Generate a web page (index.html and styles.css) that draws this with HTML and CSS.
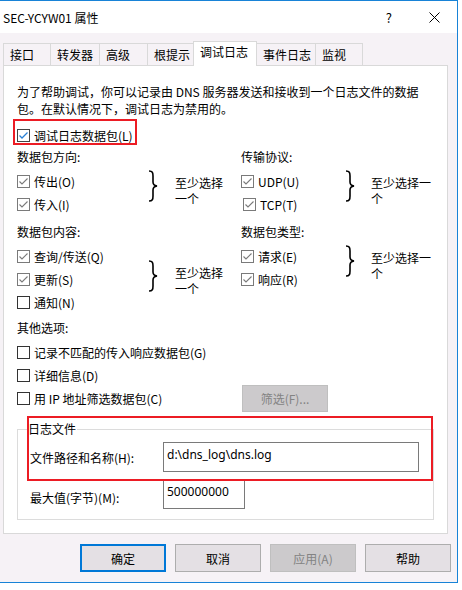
FILE: index.html
```html
<!DOCTYPE html>
<html lang="zh-CN">
<head>
    <meta charset="UTF-8">
    <title>SEC-YCYW01 属性</title>
    <link rel="stylesheet" href="styles.css">
</head>
<body>
    <div class="window">
        <div class="titlebar">
            <span class="title">SEC-YCYW01 属性</span>
            <span class="help">?</span>
            <svg class="close" width="11" height="11" viewBox="0 0 11 11"><path d="M0.5 0.5 L10.5 10.5 M10.5 0.5 L0.5 10.5" stroke="#000" stroke-width="1" fill="none"/></svg>
        </div>

        <div class="client">
            <div class="tabs">
                <div class="tab w1">接口</div>
                <div class="tab w2">转发器</div>
                <div class="tab w3">高级</div>
                <div class="tab w4">根提示</div>
                <div class="tab w5 active">调试日志</div>
                <div class="tab w6">事件日志</div>
                <div class="tab w7">监视</div>
            </div>

            <div class="panel">
                <p class="intro">为了帮助调试，你可以记录由 DNS 服务器发送和接收到一个日志文件的数据<br>包。在默认情况下，调试日志为禁用的。</p>

                <div class="row main">
                    <span class="cb on blue"><svg width="11" height="11" viewBox="0 0 11 11"><polyline points="1.5,5.5 4,8 9.5,2.5" fill="none" stroke="#2a7fd4" stroke-width="1.3"/></svg></span>调试日志数据包(L)
                </div>

                <div class="pair">
                    <div class="section left">
                        <div class="heading">数据包方向:</div>
                        <div class="opt-group">
                            <div class="list">
                                <div class="row"><span class="cb on"><svg width="11" height="11" viewBox="0 0 11 11"><polyline points="1.5,5.5 4,8 9.5,2.5" fill="none" stroke="#7a7a7a" stroke-width="1.1"/></svg></span>传出(O)</div>
                                <div class="row"><span class="cb on"><svg width="11" height="11" viewBox="0 0 11 11"><polyline points="1.5,5.5 4,8 9.5,2.5" fill="none" stroke="#7a7a7a" stroke-width="1.1"/></svg></span>传入(I)</div>
                            </div>
                            <div class="hint">
                                <svg class="brace" width="10" height="32" viewBox="0 0 10 32"><path d="M1 1 C4.5 1 5 2.5 5 6 L5 12 C5 14.5 6 15.5 9 16 C6 16.5 5 17.5 5 20 L5 26 C5 29.5 4.5 31 1 31" fill="none" stroke="#000" stroke-width="1.6"/></svg>
                                <div class="note">至少选择一个</div>
                            </div>
                        </div>
                    </div>
                    <div class="section right">
                        <div class="heading">传输协议:</div>
                        <div class="opt-group">
                            <div class="list">
                                <div class="row"><span class="cb on"><svg width="11" height="11" viewBox="0 0 11 11"><polyline points="1.5,5.5 4,8 9.5,2.5" fill="none" stroke="#7a7a7a" stroke-width="1.1"/></svg></span>UDP(U)</div>
                                <div class="row indent"><span class="cb on"><svg width="11" height="11" viewBox="0 0 11 11"><polyline points="1.5,5.5 4,8 9.5,2.5" fill="none" stroke="#7a7a7a" stroke-width="1.1"/></svg></span>TCP(T)</div>
                            </div>
                            <div class="hint">
                                <svg class="brace" width="10" height="32" viewBox="0 0 10 32"><path d="M1 1 C4.5 1 5 2.5 5 6 L5 12 C5 14.5 6 15.5 9 16 C6 16.5 5 17.5 5 20 L5 26 C5 29.5 4.5 31 1 31" fill="none" stroke="#000" stroke-width="1.6"/></svg>
                                <div class="note">至少选择一个</div>
                            </div>
                        </div>
                    </div>
                </div>

                <div class="pair second">
                    <div class="section left">
                        <div class="heading">数据包内容:</div>
                        <div class="opt-group">
                            <div class="list">
                                <div class="row"><span class="cb on"><svg width="11" height="11" viewBox="0 0 11 11"><polyline points="1.5,5.5 4,8 9.5,2.5" fill="none" stroke="#7a7a7a" stroke-width="1.1"/></svg></span>查询/传送(Q)</div>
                                <div class="row"><span class="cb on"><svg width="11" height="11" viewBox="0 0 11 11"><polyline points="1.5,5.5 4,8 9.5,2.5" fill="none" stroke="#7a7a7a" stroke-width="1.1"/></svg></span>更新(S)</div>
                                <div class="row"><span class="cb"></span>通知(N)</div>
                            </div>
                            <div class="hint low">
                                <svg class="brace" width="10" height="32" viewBox="0 0 10 32"><path d="M1 1 C4.5 1 5 2.5 5 6 L5 12 C5 14.5 6 15.5 9 16 C6 16.5 5 17.5 5 20 L5 26 C5 29.5 4.5 31 1 31" fill="none" stroke="#000" stroke-width="1.6"/></svg>
                                <div class="note">至少选择一个</div>
                            </div>
                        </div>
                    </div>
                    <div class="section right">
                        <div class="heading">数据包类型:</div>
                        <div class="opt-group">
                            <div class="list">
                                <div class="row"><span class="cb on"><svg width="11" height="11" viewBox="0 0 11 11"><polyline points="1.5,5.5 4,8 9.5,2.5" fill="none" stroke="#7a7a7a" stroke-width="1.1"/></svg></span>请求(E)</div>
                                <div class="row"><span class="cb on"><svg width="11" height="11" viewBox="0 0 11 11"><polyline points="1.5,5.5 4,8 9.5,2.5" fill="none" stroke="#7a7a7a" stroke-width="1.1"/></svg></span>响应(R)</div>
                            </div>
                            <div class="hint">
                                <svg class="brace" width="10" height="32" viewBox="0 0 10 32"><path d="M1 1 C4.5 1 5 2.5 5 6 L5 12 C5 14.5 6 15.5 9 16 C6 16.5 5 17.5 5 20 L5 26 C5 29.5 4.5 31 1 31" fill="none" stroke="#000" stroke-width="1.6"/></svg>
                                <div class="note">至少选择一个</div>
                            </div>
                        </div>
                    </div>
                </div>

                <div class="heading others">其他选项:</div>
                <div class="other-list">
                    <div class="row"><span class="cb"></span>记录不匹配的传入响应数据包(G)</div>
                    <div class="row"><span class="cb"></span>详细信息(D)</div>
                    <div class="row"><span class="cb"></span><span class="wide">用 IP 地址筛选数据包(C)</span><button class="filter" disabled>筛选(F)...</button></div>
                </div>

                <fieldset class="logfile">
                    <legend>日志文件</legend>
                    <div class="field">
                        <label>文件路径和名称(H):</label>
                        <div class="textbox path">d:\dns_log\dns.log</div>
                    </div>
                    <div class="field size">
                        <label>最大值(字节)(M):</label>
                        <div class="textbox maxsize">500000000</div>
                    </div>
                </fieldset>

                <div class="mark mark1"></div>
                <div class="mark mark2"></div>
            </div>

            <div class="buttons">
                <button class="btn default">确定</button>
                <button class="btn">取消</button>
                <button class="btn" disabled>应用(A)</button>
                <button class="btn">帮助</button>
            </div>
        </div>
    </div>
</body>
</html>
```

FILE: styles.css
```css
body {
    margin: 0; background: #fff; color: #000;
    font-family: "Noto Sans CJK SC", "Noto Sans", sans-serif; font-size: 12px;
}
.window {
    width: 458px; height: 583px; box-sizing: border-box; background: #f6f2f6;
    border: 1px solid #1883d7; border-left: none;
}
.titlebar {
    height: 32px; background: #fff; display: flex; align-items: center; padding: 0 17px 0 3px;
}
.help { margin-left: auto; margin-right: 37px; font-size: 13px; }
.close { display: block; }

.client { padding: 8px 9px 0 3px; }

/* tabs */
.tabs { display: flex; align-items: flex-end; height: 24px; }
.tab {
    height: 22px; box-sizing: border-box; border: 1px solid #d9d9d9; border-bottom: none;
    margin-left: -1px; padding-left: 6px; line-height: 21px; background: #f6f2f6; white-space: nowrap;
}
.tab:first-child { margin-left: 0; }
.tab.active { height: 25px; background: #fff; margin-bottom: -1px; position: relative; z-index: 1; line-height: 19px; }
.w1 { width: 48px; } .w2 { width: 50px; } .w3 { width: 49px; } .w4 { width: 47px; }
.w5 { width: 64px; } .w6 { width: 60px; } .w7 { width: 48px; }

.panel {
    height: 469px; box-sizing: border-box; border: 1px solid #d9d9d9; background: #fff;
    padding: 17px 13px 0; position: relative;
}
.intro { margin: 0; line-height: 17px; white-space: nowrap; }

/* checkbox rows */
.row { display: flex; align-items: center; height: 23px; white-space: nowrap; }
.row.main { margin-top: 7px; }
.row.indent { padding-left: 2px; }
.cb {
    width: 13px; height: 13px; box-sizing: border-box; border: 1px solid #333; margin-right: 4px;
    flex: none; display: flex;
}
.cb.on { border-color: #7a7a7a; }
.cb.blue { border-color: #444; }
.cb svg { display: block; }

.pair { display: flex; }
.pair.second { margin-top: 6px; }
.left { width: 224px; }
.heading { line-height: 20px; }
.opt-group { display: flex; align-items: flex-start; margin-top: 3px; }
.left .list { width: 131px; }
.right .list { width: 104px; }
.hint { display: flex; align-items: flex-start; }
.hint.low { margin-top: 15px; }
.brace { display: block; flex: none; }
.note { margin-top: 5px; line-height: 16px; }
.left .note { margin-left: 17px; width: 50px; }
.right .note { margin-left: 16px; width: 62px; }

.heading.others { margin-top: 4px; }
.other-list { margin-top: 3px; }
.wide { width: 208px; }
.filter {
    width: 86px; height: 27px; flex: none; box-sizing: border-box; padding: 0;
    background: #cccacc; border: 1px solid #bfbfbf; color: #838383;
    font-family: inherit; font-size: 12px;
}

/* log file group */
.logfile {
    margin: 11px 0 0; padding: 5px 12px 10px; width: 417px; box-sizing: border-box; min-width: 0;
    border: 1px solid #dcdcdc;
}
.logfile legend { padding: 0 1px; margin-left: -3px; line-height: 16px; }
.field { display: flex; align-items: center; }
.field label { width: 133px; flex: none; }
.field.size { margin-top: 8px; }
.field.size label { margin-top: 5px; }
.textbox {
    border: 1px solid #7a7a7a; box-sizing: border-box; padding: 3px 3px; line-height: 18px;
    font-family: "Noto Sans", sans-serif; font-size: 12px;
}
.path { width: 256px; height: 30px; }
.maxsize { width: 82px; height: 29px; padding-top: 2px; }

/* red highlight boxes */
.mark { position: absolute; border: 2px solid #ec1c24; box-sizing: border-box; }
.mark1 { left: 9px; top: 53px; width: 124px; height: 26px; }
.mark2 { left: 23px; top: 350px; width: 406px; height: 65px; }

/* dialog buttons */
.buttons { display: flex; justify-content: flex-end; gap: 9px; margin: 10px -3px 0 0; }
.btn {
    width: 86px; height: 28px; box-sizing: border-box; padding: 0;
    border: 1px solid #adadad; background: #e4e0e4; color: #000;
    font-family: inherit; font-size: 12px;
}
.btn.default { border: 2px solid #0078d7; }
.btn[disabled] { background: #cccacc; border-color: #bfbfbf; color: #838383; }
```
